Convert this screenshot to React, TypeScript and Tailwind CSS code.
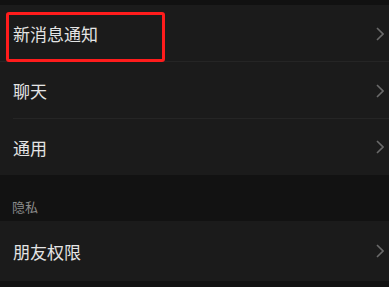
type RowProps = {
  label: string;
  height: string;
  divider?: "full" | "inset" | "none";
};

function Chevron() {
  return (
    <svg width="8" height="14" viewBox="0 0 8 14" fill="none" className="shrink-0">
      <polyline points="1,1 7,7 1,13" stroke="#6a6a6a" strokeWidth="1.6" strokeLinejoin="miter" />
    </svg>
  );
}

function Row({ label, height, divider = "none" }: RowProps) {
  return (
    <div className={`relative flex items-center bg-[#1b1b1b] pl-[13px] pr-[5px] ${height}`}>
      <span className="flex-1 text-[17px] leading-none text-[#e4e4e4]">{label}</span>
      <Chevron />
      {divider === "full" && <div className="absolute bottom-0 left-0 right-0 h-px bg-[#252525]" />}
      {divider === "inset" && <div className="absolute bottom-0 left-[13px] right-0 h-px bg-[#252525]" />}
    </div>
  );
}

export default function App() {
  return (
    <div
      className="relative h-[287px] w-[389px] overflow-hidden bg-[#121212]"
      style={{ fontFamily: '"Noto Sans CJK SC", "Noto Sans", sans-serif' }}
    >
      <div className="h-[5px] bg-[#111111]" />
      <Row label="新消息通知" height="h-[57px]" divider="full" />
      <Row label="聊天" height="h-[57px]" divider="inset" />
      <Row label="通用" height="h-[56px]" />
      <div className="flex h-[46px] items-end bg-[#121212] pb-[8px] pl-[12px]">
        <span className="text-[13px] leading-none text-[#8a8a8a]">隐私</span>
      </div>
      <Row label="朋友权限" height="h-[60px]" />

      {/* red highlight annotation */}
      <div className="pointer-events-none absolute left-[6px] top-[12px] h-[50px] w-[159px] rounded-[3px] border-[3px] border-[#ff1c1c]" />
    </div>
  );
}
